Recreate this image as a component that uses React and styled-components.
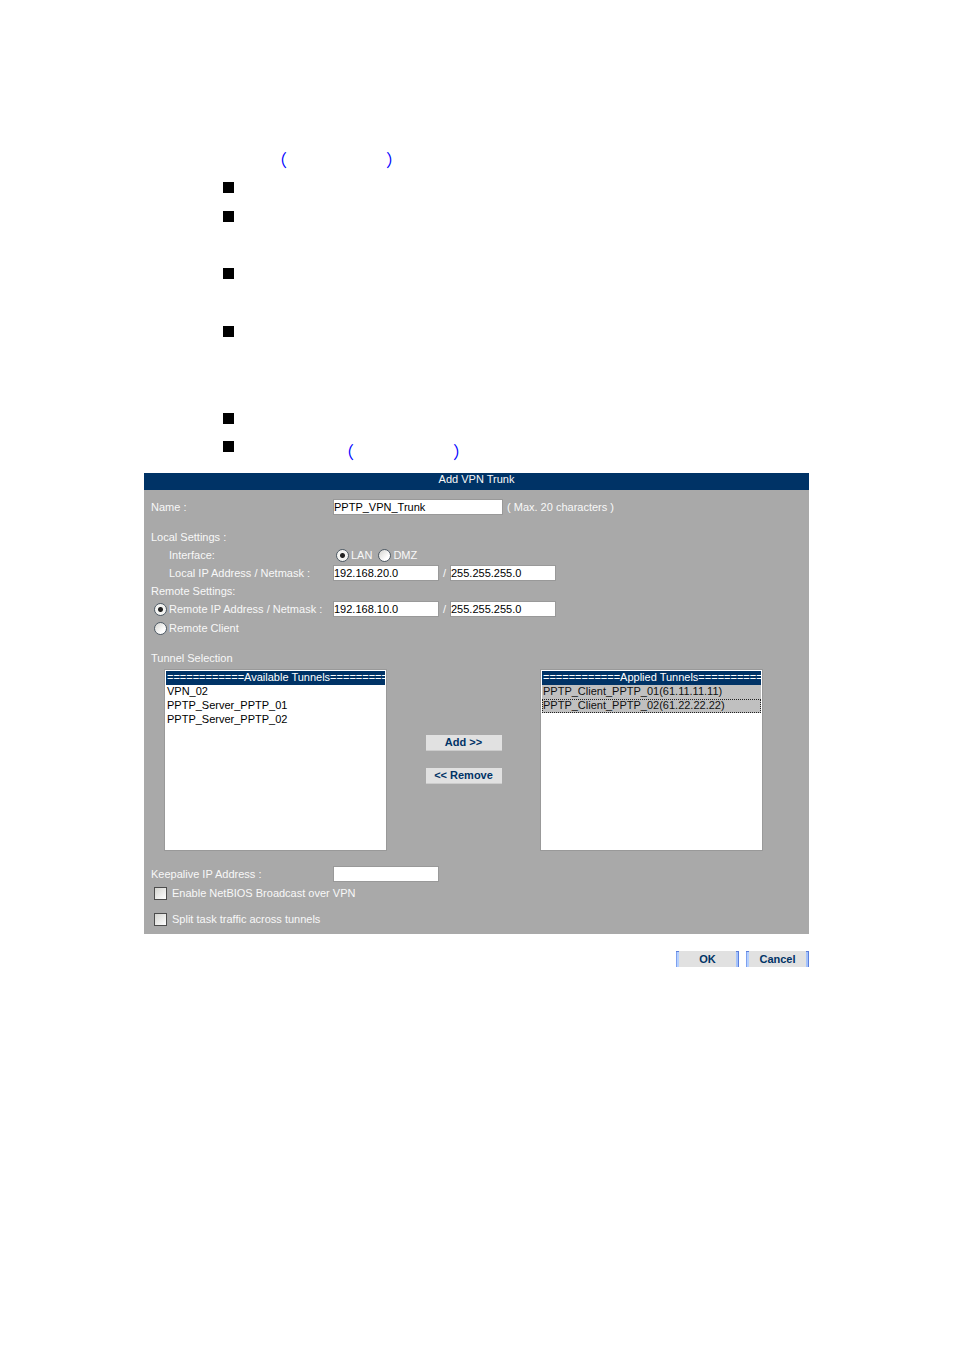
import { useState } from "react";
import styled, { createGlobalStyle } from "styled-components";

const GlobalStyle = createGlobalStyle`
  body {
    margin: 0;
    background-color: #ffffff;
  }
  * {
    box-sizing: border-box;
  }
`;

const Page = styled.div`
  padding: 149px 145px 40px 144px;
  font-family: "Liberation Sans", Arial, sans-serif;
  font-size: 11px;
  line-height: 14px;
`;

const Notes = styled.div`
  color: #0000ff;
`;

const FigureRef = styled.span`
  display: flex;
  justify-content: space-between;
  width: 133px;
  margin-left: ${(props) => props.$indent}px;
  color: #0000ff;
  font-family: "Noto Sans CJK SC", sans-serif;
  font-size: 17px;
  font-weight: 400;
  line-height: 22px;
`;

const BulletList = styled.ul`
  list-style: none;
  margin: 11px 0 0 79px;
  padding: 0;
`;

const Bullet = styled.li`
  display: flex;
  align-items: flex-start;
  height: ${(props) => props.$height}px;
  &::before {
    content: "";
    flex: none;
    width: 11px;
    height: 11px;
    background-color: #000000;
  }
`;

const Panel = styled.section`
  margin-top: 3px;
  background-color: #a9a9a9;
  color: #f8f8f8;
`;

const Title = styled.h1`
  margin: 0;
  height: 17px;
  background-color: #003366;
  font-size: 11px;
  font-weight: normal;
  line-height: 12px;
  text-align: center;
`;

const Body = styled.div`
  padding: 8px 7px 5px;
`;

const Row = styled.div`
  display: flex;
  align-items: center;
  height: ${(props) => (props.$tall ? 20 : 18)}px;
  margin-top: ${(props) => props.$gap || 0}px;
`;

const LabelCell = styled.div`
  display: flex;
  align-items: center;
  flex: none;
  width: 182px;
  padding-left: ${(props) => props.$indent || 0}px;
`;

const Field = styled.input`
  width: ${(props) => (props.$wide ? 170 : 106)}px;
  height: 16px;
  padding: 0;
  border: 1px solid #999999;
  border-radius: 0;
  outline: none;
  background-color: #ffffff;
  color: #000000;
  font: inherit;
`;

const Slash = styled.span`
  width: 11px;
  text-align: center;
`;

const Hint = styled.span`
  margin-left: 4px;
`;

const Choice = styled.label`
  display: flex;
  align-items: center;
  gap: 2px;
  margin-left: 3px;
  & + & {
    margin-left: 6px;
  }
`;

const Radio = styled.input.attrs({ type: "radio" })`
  appearance: none;
  flex: none;
  width: 13px;
  height: 13px;
  margin: 0;
  border: 1px solid #4f5b66;
  border-radius: 50%;
  background: linear-gradient(135deg, #d4d4d0, #ffffff 70%);
  &:checked {
    background: radial-gradient(circle, #222222 0 2px, #f4f4f2 3px);
  }
`;

const CheckLine = styled.label`
  display: flex;
  align-items: center;
  gap: 5px;
  height: 20px;
  margin-top: ${(props) => props.$gap || 0}px;
  padding-left: 3px;
`;

const Check = styled.input.attrs({ type: "checkbox" })`
  appearance: none;
  width: 13px;
  height: 13px;
  margin: 0;
  border: 1px solid #4c4c4c;
  background: linear-gradient(135deg, #d4d4d0, #ffffff);
  &:checked {
    background: #003366;
  }
`;

const Transfer = styled.div`
  display: flex;
  align-items: center;
  margin-top: 2px;
  padding-left: 13px;
`;

const TunnelList = styled.select`
  flex: none;
  width: 223px;
  height: 182px;
  padding: 1px;
  border: 1px solid #999999;
  border-radius: 0;
  outline: none;
  overflow: hidden;
  background-color: #ffffff;
  color: #000000;
  font: inherit;
`;

const Tunnel = styled.option`
  height: 14px;
  min-height: 14px;
  padding: 0 1px;
  overflow: hidden;
  line-height: 14px;
  white-space: nowrap;
  &:checked {
    background: linear-gradient(#c0c0c0, #c0c0c0);
  }
  &:checked:last-child {
    outline: 1px dotted #222222;
    outline-offset: -1px;
  }
`;

const ListHeading = styled(Tunnel)`
  background-color: #003366;
  color: #ffffff;
`;

const TransferButtons = styled.div`
  display: flex;
  flex-direction: column;
  align-items: center;
  gap: 17px;
  width: 153px;
  padding-bottom: 2px;
`;

const Button = styled.button`
  width: 76px;
  height: 16px;
  padding: 0;
  border: 0;
  border-bottom: 1px solid #cccccc;
  background-color: #e1e1e1;
  color: #003366;
  font: inherit;
  font-weight: bold;
`;

/* blue bracket on each side: dark tips, pale upright */
const FormButton = styled(Button)`
  width: 63px;
  border: 0;
  background-image: linear-gradient(#5b7fdc, #5b7fdc),
    linear-gradient(#5b7fdc, #5b7fdc),
    linear-gradient(90deg, #7fa0ee 1px, #b4d0ff 1px),
    linear-gradient(270deg, #5b7fdc 1px, #a4c2fb 1px);
  background-position: left top, right top, left top, right top;
  background-size: 3px 1px, 3px 1px, 3px 100%, 3px 100%;
  background-repeat: no-repeat;
`;

const Actions = styled.div`
  display: flex;
  justify-content: flex-end;
  gap: 7px;
  margin-top: 17px;
`;

const available = ["VPN_02", "PPTP_Server_PPTP_01", "PPTP_Server_PPTP_02"];
const applied = [
  "PPTP_Client_PPTP_01(61.11.11.11)",
  "PPTP_Client_PPTP_02(61.22.22.22)",
];
const bulletHeights = [29, 57, 58, 87, 28];

const Reference = ({ indent }) => (
  <FigureRef $indent={indent}>
    <span>（</span>
    <span>）</span>
  </FigureRef>
);

const AddressPair = ({ id, label, address, netmask }) => (
  <>
    <Field id={id} aria-label={`${label} address`} defaultValue={address} />
    <Slash>/</Slash>
    <Field aria-label={`${label} netmask`} defaultValue={netmask} />
  </>
);

const App = () => {
  const [lan, setLan] = useState("LAN");
  const [remote, setRemote] = useState("address");
  const [selected, setSelected] = useState(applied);

  const changeSelected = (e) =>
    setSelected(Array.from(e.target.selectedOptions, (o) => o.value));

  return (
    <Page>
      <GlobalStyle />
      <Notes>
        <Reference indent={126} />
        <BulletList>
          {bulletHeights.map((height, i) => (
            <Bullet key={i} $height={height} />
          ))}
          <Bullet $height={29}>
            <Reference indent={103} />
          </Bullet>
        </BulletList>
      </Notes>
      <Panel>
        <Title>Add VPN Trunk</Title>
        <Body>
          <Row>
            <LabelCell>
              <label htmlFor="name">Name :</label>
            </LabelCell>
            <Field id="name" $wide defaultValue="PPTP_VPN_Trunk" />
            <Hint>( Max. 20 characters )</Hint>
          </Row>

          <Row $gap={12}>Local Settings :</Row>
          <Row>
            <LabelCell $indent={18}>Interface:</LabelCell>
            {["LAN", "DMZ"].map((name) => (
              <Choice key={name}>
                <Radio
                  name="interface"
                  checked={lan === name}
                  onChange={() => setLan(name)}
                />
                {name}
              </Choice>
            ))}
          </Row>
          <Row>
            <LabelCell $indent={18}>
              <label htmlFor="local">Local IP Address / Netmask :</label>
            </LabelCell>
            <AddressPair
              id="local"
              label="Local"
              address="192.168.20.0"
              netmask="255.255.255.0"
            />
          </Row>

          <Row>Remote Settings:</Row>
          <Row>
            <LabelCell>
              <Choice>
                <Radio
                  name="remote"
                  checked={remote === "address"}
                  onChange={() => setRemote("address")}
                />
                Remote IP Address / Netmask :
              </Choice>
            </LabelCell>
            <AddressPair
              id="remote"
              label="Remote"
              address="192.168.10.0"
              netmask="255.255.255.0"
            />
          </Row>
          <Row $tall>
            <Choice>
              <Radio
                name="remote"
                checked={remote === "client"}
                onChange={() => setRemote("client")}
              />
              Remote Client
            </Choice>
          </Row>

          <Row $gap={11}>Tunnel Selection</Row>
          <Transfer>
            <TunnelList multiple aria-label="Available Tunnels">
              <ListHeading>============Available Tunnels=========</ListHeading>
              {available.map((name) => (
                <Tunnel key={name}>{name}</Tunnel>
              ))}
            </TunnelList>
            <TransferButtons>
              <Button type="button">Add &gt;&gt;</Button>
              <Button type="button">&lt;&lt; Remove</Button>
            </TransferButtons>
            <TunnelList
              multiple
              aria-label="Applied Tunnels"
              value={selected}
              onChange={changeSelected}
            >
              <ListHeading>============Applied Tunnels==========</ListHeading>
              {applied.map((name) => (
                <Tunnel key={name}>{name}</Tunnel>
              ))}
            </TunnelList>
          </Transfer>

          <Row $gap={14}>
            <LabelCell>
              <label htmlFor="keepalive">Keepalive IP Address :</label>
            </LabelCell>
            <Field id="keepalive" />
          </Row>
          <CheckLine>
            <Check />
            Enable NetBIOS Broadcast over VPN
          </CheckLine>
          <CheckLine $gap={6}>
            <Check />
            Split task traffic across tunnels
          </CheckLine>
        </Body>
      </Panel>
      <Actions>
        <FormButton type="button">OK</FormButton>
        <FormButton type="button">Cancel</FormButton>
      </Actions>
    </Page>
  );
};

export default App;
